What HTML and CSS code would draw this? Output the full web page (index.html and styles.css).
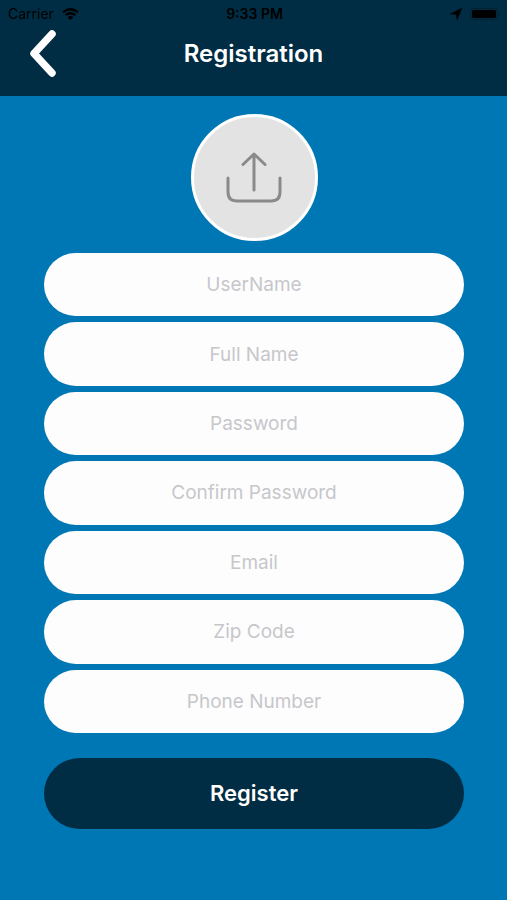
FILE: index.html
```html
<!DOCTYPE html>
<html lang="en">
<head>
  <meta charset="utf-8">
  <meta name="viewport" content="width=device-width, initial-scale=1">
  <title>Registration</title>
  <link rel="stylesheet" href="styles.css">
</head>
<body>
  <header class="header">
    <div class="status">
      <div class="status-left">
        <span>Carrier</span>
        <svg class="wifi" viewBox="0 0 17 12" aria-hidden="true">
          <path d="M1 4.4Q8.5-1.8 16 4.4M3.6 7.2Q8.5 3.2 13.4 7.2" fill="none" stroke="currentColor" stroke-width="2.3"/>
          <path d="M5.6 9.2Q8.5 6.8 11.4 9.2L8.5 12Z" fill="currentColor"/>
        </svg>
      </div>
      <span class="time">9:33 PM</span>
      <div class="status-right">
        <svg class="location" viewBox="0 0 12 12" aria-hidden="true">
          <path d="M11.7.3L7.2 11.8L6 6.2L.3 6Z" fill="currentColor" stroke="currentColor" stroke-width=".6"/>
        </svg>
        <svg class="battery" viewBox="0 0 31 12" aria-hidden="true">
          <rect x=".5" y=".5" width="27" height="11" rx="3" fill="none" stroke="currentColor" stroke-opacity=".3"/>
          <rect x="2" y="2" width="24" height="8" rx="1.5" fill="currentColor"/>
          <path d="M29 4Q31 6 29 8Z" fill="currentColor" fill-opacity=".35"/>
        </svg>
      </div>
    </div>
    <nav class="navbar">
      <button class="back" type="button" aria-label="Back">
        <svg viewBox="0 0 28 48" aria-hidden="true">
          <path d="M23 4L5 23.500L23 43" fill="none" stroke="currentColor" stroke-width="7.500" stroke-linecap="round" stroke-linejoin="round"/>
        </svg>
      </button>
      <h1 class="title">Registration</h1>
    </nav>
  </header>
  <main class="content">
    <button class="avatar" type="button" aria-label="Upload photo">
      <svg viewBox="0 0 56 52" aria-hidden="true">
        <path d="M2 26V40Q2 49 11 49H45Q54 49 54 40V26M28 38V2M17 12.500L28 2L39 12.500" fill="none" stroke="currentColor" stroke-width="3" stroke-linecap="round" stroke-linejoin="round"/>
      </svg>
    </button>
    <form class="form">
      <div class="fields">
        <input class="field" type="text" placeholder="UserName" aria-label="UserName">
        <input class="field" type="text" placeholder="Full Name" aria-label="Full Name">
        <input class="field" type="password" placeholder="Password" aria-label="Password">
        <input class="field" type="password" placeholder="Confirm Password" aria-label="Confirm Password">
        <input class="field" type="email" placeholder="Email" aria-label="Email">
        <input class="field" type="text" placeholder="Zip Code" aria-label="Zip Code">
        <input class="field" type="tel" placeholder="Phone Number" aria-label="Phone Number">
      </div>
      <button class="register" type="submit">Register</button>
    </form>
  </main>
</body>
</html>
```
FILE: styles.css
```css
* {
  box-sizing: border-box;
}

body {
  margin: 0;
  min-height: 100vh;
  background: #0077b5;
  font-family: Inter, "Liberation Sans", sans-serif;
}

button,
input {
  margin: 0;
  border: 0;
  font-family: inherit;
}

svg {
  display: block;
}

.header {
  background: #002d44;
  color: #fff;
}

.status {
  display: grid;
  grid-template-columns: 1fr auto 1fr;
  align-items: center;
  height: 28px;
  padding: 0 6px 0 8px;
  color: #000;
  font-size: 14px;
  line-height: 16px;
}

.status-left,
.status-right {
  display: flex;
  align-items: center;
  gap: 8px;
}

.status-right {
  justify-content: flex-end;
}

.wifi {
  width: 17px;
  height: 12px;
}

.time {
  font-weight: 600;
}

.location {
  width: 12px;
  height: 12px;
}

.battery {
  width: 31px;
  height: 12px;
}

.navbar {
  display: grid;
  grid-template-columns: 1fr auto 1fr;
  align-items: start;
  height: 68px;
  padding: 0 29px;
}

.back {
  justify-self: start;
  padding: 2px 0;
  background: none;
  color: inherit;
}

.back svg {
  width: 28px;
  height: 48px;
}

.title {
  margin: 0;
  font-size: 24px;
  font-weight: 600;
  line-height: 52px;
}

.content {
  padding: 18px 43px 18px 44px;
}

.avatar {
  display: grid;
  place-items: center;
  width: 127px;
  height: 127px;
  margin: 0 auto 12px;
  padding: 0;
  border: 3px solid #fff;
  border-radius: 50%;
  background: #e3e3e3;
  color: #8a8a8a;
}

.avatar svg {
  width: 56px;
  height: 52px;
}

.fields {
  display: grid;
  grid-auto-rows: 1fr;
  gap: 6px;
  min-height: 480px;
}

.field {
  width: 100%;
  padding: 0 32px;
  border-radius: 32px;
  background: #fdfdfd;
  color: #222;
  font-size: 19px;
  text-align: center;
}

.field::placeholder {
  color: #c7c7cb;
  opacity: 1;
}

.register {
  width: 100%;
  height: 71px;
  margin-top: 25px;
  padding: 0 32px 2px;
  border-radius: 36px;
  background: #002d44;
  color: #fff;
  font-size: 22px;
  font-weight: 600;
}
```
